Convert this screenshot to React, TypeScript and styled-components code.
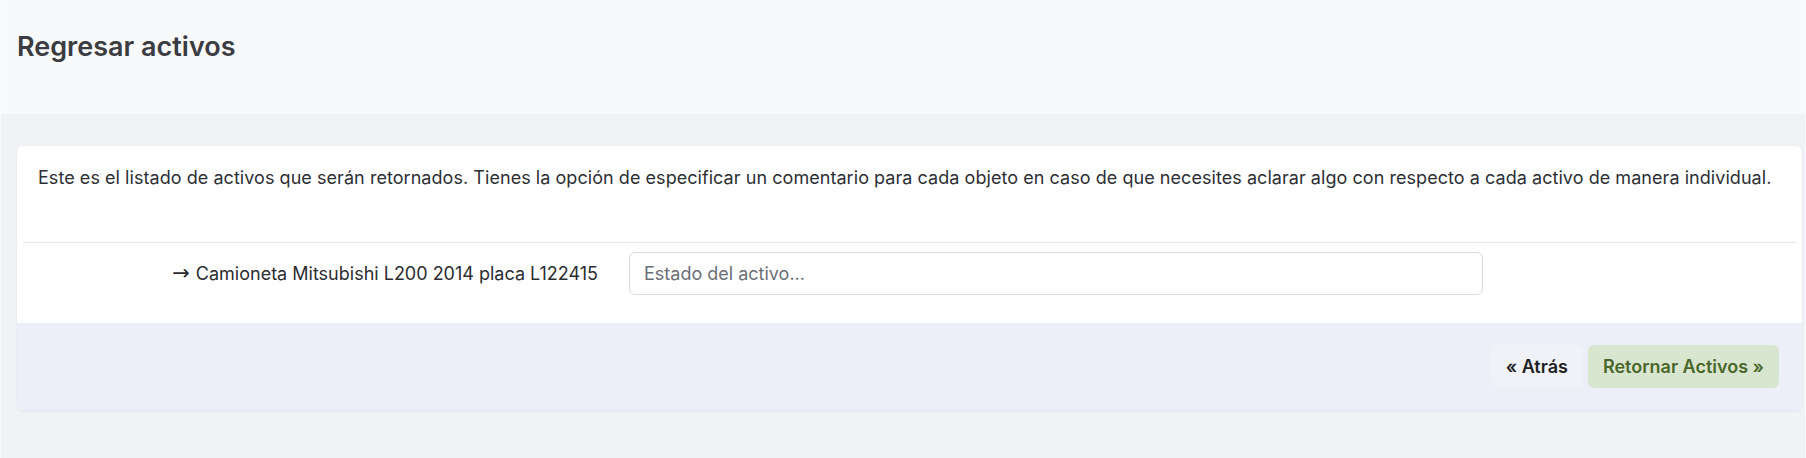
import styled, { createGlobalStyle } from 'styled-components'

const GlobalStyle = createGlobalStyle`
  * {
    box-sizing: border-box;
  }

  html, body {
    margin: 0;
    padding: 0;
    background: #f1f2f6;
  }

  body {
    font-family: Inter, 'Noto Sans', 'Liberation Sans', sans-serif;
    color: #2b2d31;
  }
`

const Page = styled.div`
  min-height: 458px;
  border-left: 1px solid #f9fafc;
  border-right: 1px solid #f9fafc;
  background: #f1f2f6;
`

const Header = styled.header`
  height: 114px;
  padding: 30px 16px 0;
  background: #f8f9fb;
`

const Title = styled.h1`
  margin: 0;
  font-size: 27px;
  line-height: 34px;
  font-weight: 600;
  color: #3a3c41;
`

const Main = styled.main`
  padding: 32px 3px 0 16px;
`

const Card = styled.section`
  background: #fff;
  border-radius: 6px;
  box-shadow: 0 1px 3px rgba(40, 45, 80, 0.08);
  overflow: hidden;
`

const Intro = styled.p`
  margin: 0;
  padding: 18px 4px 51px 21px;
  font-size: 18px;
  line-height: 27px;
  letter-spacing: 0.05px;
  color: #2d2f34;
`

const Divider = styled.hr`
  margin: 0 6px;
  border: 0;
  border-top: 1px solid #e5e5ee;
`

const ItemRow = styled.div`
  display: grid;
  grid-template-columns: 581px 854px;
  column-gap: 31px;
  align-items: center;
  padding: 9px 0 28px;
`

const ItemLabel = styled.label`
  text-align: right;
  font-size: 18px;
  line-height: 27px;
  color: #2b2d31;
`

const Arrow = styled.span`
  font-family: 'DejaVu Sans', sans-serif;
  font-size: 21px;
  margin-right: 6px;
`

const Input = styled.input`
  height: 43px;
  padding: 0 14px;
  border: 1px solid #dcdce6;
  border-radius: 6px;
  font-family: inherit;
  font-size: 18px;
  color: #2b2d31;
  background: #fff;
  outline: none;

  &::placeholder {
    color: #6c6f76;
  }
`

const Footer = styled.footer`
  display: flex;
  justify-content: flex-end;
  gap: 5px;
  padding: 22px 23px 22px;
  background: #eceff7;
`

const Button = styled.button<{ $variant?: 'primary' | 'light' }>`
  height: 43px;
  padding: 0 15px;
  border: 0;
  border-radius: 6px;
  font-family: inherit;
  font-size: 18px;
  font-weight: 600;
  cursor: pointer;
  background: ${(p) => (p.$variant === 'primary' ? '#d9e6cf' : '#f1f2f7')};
  color: ${(p) => (p.$variant === 'primary' ? '#4a672b' : '#1d1f24')};
`

const activos = ['Camioneta Mitsubishi L200 2014 placa L122415']

export default function App() {
  return (
    <>
      <GlobalStyle />
      <Page>
        <Header>
          <Title>Regresar activos</Title>
        </Header>
        <Main>
          <Card>
            <Intro>
              Este es el listado de activos que serán retornados. Tienes la opción de especificar un comentario
              para cada objeto en caso de que necesites aclarar algo con respecto a cada activo de manera individual.
            </Intro>
            <Divider />
            {activos.map((activo) => (
              <ItemRow key={activo}>
                <ItemLabel>
                  <Arrow>→</Arrow>
                  {activo}
                </ItemLabel>
                <Input placeholder="Estado del activo..." />
              </ItemRow>
            ))}
            <Footer>
              <Button $variant="light">« Atrás</Button>
              <Button $variant="primary">Retornar Activos »</Button>
            </Footer>
          </Card>
        </Main>
      </Page>
    </>
  )
}
